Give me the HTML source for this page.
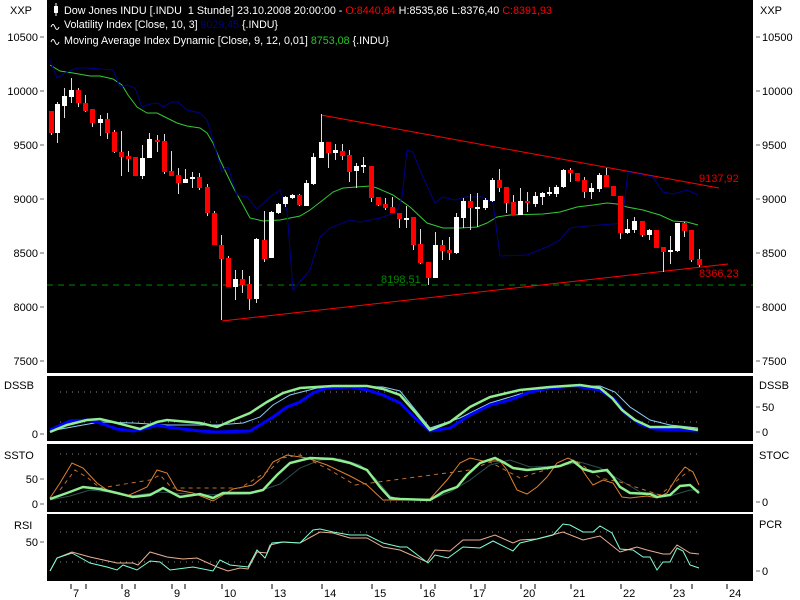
<!DOCTYPE html>
<html><head><meta charset="utf-8">
<style>
html,body{margin:0;padding:0;background:#fff;width:800px;height:600px;overflow:hidden}
svg{display:block;font-family:"Liberation Sans",sans-serif;font-size:11px}
</style></head>
<body>
<svg id="s" width="800" height="600" xmlns="http://www.w3.org/2000/svg">
<rect width="800" height="600" fill="#fff"/>
<rect x="47" y="0" width="706" height="373" fill="#000"/>
<rect x="47" y="376" width="706" height="65" fill="#000"/>
<rect x="47" y="444" width="706" height="68" fill="#000"/>
<rect x="47" y="514" width="706" height="67" fill="#000"/>
<g id="g"></g>
<rect x="54" y="6" width="4" height="7" fill="#fff"/><line x1="56" y1="3" x2="56" y2="16" stroke="#fff"/>
<text x="64" y="14" fill="#fff" textLength="488" lengthAdjust="spacingAndGlyphs">Dow Jones INDU [.INDU&#160; 1 Stunde] 23.10.2008 20:00:00 - <tspan fill="#f00">O:8440,84</tspan> H:8535,86 L:8376,40 <tspan fill="#f00">C:8391,93</tspan></text>
<path d="M51 27 q2-5 4 0 t4 0" stroke="#fff" fill="none"/>
<text x="64" y="28" fill="#fff" textLength="214" lengthAdjust="spacingAndGlyphs">Volatility Index [Close, 10, 3] <tspan fill="#00008b">9029,45</tspan> {.INDU}</text>
<path d="M51 42 q2-5 4 0 t4 0" stroke="#fff" fill="none"/>
<text x="64" y="44" fill="#fff" textLength="325" lengthAdjust="spacingAndGlyphs">Moving Average Index Dynamic [Close, 9, 12, 0,01] <tspan fill="#2c2">8753,08</tspan> {.INDU}</text>
<g fill="#000">
<text x="10" y="14">XXP</text><text x="760" y="14">XXP</text>
<text x="4" y="389">DSSB</text><text x="759" y="389">DSSB</text>
<text x="4" y="459">SSTO</text><text x="759" y="459">STOC</text>
<text x="14" y="529">RSI</text><text x="759" y="528">PCR</text>
</g>
<text x="381" y="283" fill="#080">8198,51</text>
<text x="699" y="182" fill="#d00">9137,92</text>
<text x="699" y="277" fill="#d00">8366,23</text>
</svg>
<script>
var g=document.getElementById('g'),h='';
function L(p,c,w,extra){h+='<polyline fill="none" stroke="'+c+'" stroke-width="'+(w||1)+'" '+(extra||'')+' points="'+p+'"/>';}
h+='<line x1="47" y1="285" x2="753" y2="285" stroke="#080" stroke-dasharray="6,5"/>';
[392,422,454,502,532,562].forEach(function(y){h+='<line x1="60" y1="'+y+'" x2="700" y2="'+y+'" stroke="#888" stroke-dasharray="1,5"/>';});
[[10500,37],[10000,91],[9500,145],[9000,199],[8500,253],[8000,307],[7500,361]].forEach(function(a){
h+='<text x="38" y="'+(a[1]+4)+'" text-anchor="end" fill="#000">'+a[0]+'</text><line x1="40" y1="'+a[1]+'" x2="44" y2="'+a[1]+'" stroke="#666"/>';
h+='<line x1="756" y1="'+a[1]+'" x2="760" y2="'+a[1]+'" stroke="#666"/><text x="762" y="'+(a[1]+4)+'" fill="#000">'+a[0]+'</text>';});
[[50,407],[0,432]].forEach(function(a){h+='<line x1="756" y1="'+a[1]+'" x2="760" y2="'+a[1]+'" stroke="#666"/><text x="762" y="'+(a[1]+4)+'" fill="#000">'+a[0]+'</text>';});
h+='<text x="38" y="438" text-anchor="end">0</text><line x1="40" y1="434" x2="44" y2="434" stroke="#666"/>';
h+='<text x="38" y="483" text-anchor="end">50</text><line x1="40" y1="479" x2="44" y2="479" stroke="#666"/>';
h+='<text x="38" y="508" text-anchor="end">0</text><line x1="40" y1="504" x2="44" y2="504" stroke="#666"/>';
h+='<text x="38" y="546" text-anchor="end">50</text><line x1="40" y1="542" x2="44" y2="542" stroke="#666"/>';
h+='<line x1="756" y1="502" x2="760" y2="502" stroke="#666"/><text x="762" y="506">0</text>';
h+='<line x1="756" y1="571" x2="760" y2="571" stroke="#666"/><text x="762" y="575">0</text>';
[['7',71,86],['8',122,135],['9',172,185],['10',222,0],['13',272,0],['14',322,0],['15',372,0],['16',421,435],['17',471,485],['20',521,535],['21',571,0],['22',621,0],['23',671,692],['24',727,0]].forEach(function(d){
h+='<line x1="'+d[1]+'" y1="584" x2="'+d[1]+'" y2="589" stroke="#000"/><text x="'+(d[1]+2)+'" y="597" fill="#000">'+d[0]+'</text>';
if(d[2])h+='<line x1="'+d[2]+'" y1="584" x2="'+d[2]+'" y2="589" stroke="#000"/>';});
h+='<line x1="321" y1="115" x2="719" y2="188" stroke="#f00"/><line x1="222" y1="321" x2="728" y2="264" stroke="#f00"/>';
L('50,65 60,71 73,73 90,76 100,76 113,79 122,85 128,95 137,107 147,113 157,113 167,118 177,123 187,126 200,128 207,133 213,143 220,160 233,187 243,205 250,218 263,221 280,220 300,216 310,210 323,200 333,192 343,188 370,186 377,188 393,195 410,207 427,223 443,228 460,228 477,227 487,223 497,217 510,215 543,214 560,212 577,207 593,205 607,203 617,204 627,207 643,210 660,215 673,221 687,222 698,225','#3c3');
L('50,60 57,78 67,72 77,68 87,68 113,70 120,87 127,85 135,88 142,107 150,104 158,103 163,107 172,102 178,102 187,110 200,113 207,120 213,140 222,172 225,168 228,167 237,195 247,197 257,209 270,197 280,190 287,210 293,290 303,278 310,270 320,237 330,228 350,220 360,222 380,218 397,212 402,197 407,150 413,152 422,175 435,203 442,197 455,200 465,197 483,197 493,203 500,256 527,255 547,247 560,240 570,228 587,226 613,224 622,223 628,172 653,177 663,192 673,194 687,190 698,195','#00008b');
var C=[[51,111,133,111,135,1],[57,104,133,102,143,0],[64,96,106,88,118,0],[71,90,97,78,103,0],[78,90,103,88,107,1],[85,103,111,95,112,1],[92,109,123,109,127,1],[100,119,123,115,136,0],[107,119,133,113,139,1],[114,132,152,130,153,1],[121,152,157,131,176,1],[128,156,159,151,172,1],[135,157,176,157,176,1],[142,158,176,145,179,0],[149,139,158,133,158,0],[157,140,142,135,152,1],[164,141,172,134,174,1],[171,171,176,151,176,1],[178,175,183,168,194,1],[185,179,183,169,183,0],[192,177,179,172,188,0],[199,177,188,173,190,1],[207,187,213,184,216,1],[214,213,245,211,245,1],[221,245,259,235,320,1],[228,258,287,256,287,1],[235,279,287,270,300,0],[242,279,285,270,293,1],[249,284,299,276,310,1],[256,239,299,238,303,0],[264,240,259,211,262,1],[271,212,258,211,258,0],[278,204,213,203,214,0],[285,197,204,196,207,0],[292,195,198,194,199,0],[299,195,205,194,206,1],[306,183,206,180,206,0],[313,157,184,153,185,0],[321,142,158,114,158,0],[328,142,153,142,168,1],[335,150,153,144,160,0],[342,151,156,144,160,1],[349,155,172,150,182,1],[356,166,171,163,188,0],[363,165,167,157,173,0],[371,166,198,166,202,1],[378,197,205,197,206,1],[385,204,208,198,210,1],[392,207,213,197,213,1],[399,213,219,213,228,1],[406,218,219,206,228,0],[413,217,245,217,250,1],[420,244,263,229,264,1],[428,262,278,262,285,1],[435,245,278,232,278,0],[442,245,251,240,260,1],[449,250,253,237,260,1],[456,217,253,213,254,0],[463,201,218,198,228,0],[470,201,208,194,230,1],[477,207,208,193,227,0],[485,200,208,198,210,0],[492,180,201,178,202,0],[499,180,188,169,192,1],[506,187,203,187,213,1],[513,202,215,195,215,1],[520,201,215,188,215,0],[527,201,203,192,212,1],[535,196,204,192,207,0],[542,193,197,192,205,0],[549,192,194,187,196,0],[556,187,194,185,197,0],[563,170,187,169,188,0],[570,170,173,168,182,1],[577,173,181,173,181,1],[584,180,192,177,198,1],[591,188,192,183,199,0],[599,175,189,173,192,0],[606,175,187,168,187,1],[613,186,196,186,196,1],[620,196,233,196,239,1],[627,229,233,219,234,0],[634,221,230,217,233,0],[642,221,235,221,237,1],[649,230,235,229,240,0],[656,230,248,230,248,1],[663,247,252,247,272,1],[670,250,252,236,264,0],[677,223,251,223,252,0],[684,223,231,222,237,1],[691,230,260,230,262,1],[699,259,265,249,267,1]];
C.forEach(function(c){var x=c[0];h+='<line x1="'+(x+.5)+'" y1="'+c[3]+'" x2="'+(x+.5)+'" y2="'+c[4]+'" stroke="#ddd"/>';
h+='<rect x="'+(x-2)+'" y="'+c[1]+'" width="5" height="'+Math.max(2,c[2]-c[1])+'" fill="'+(c[5]?'#f00':'#fff')+'"/>';});
L('50,431 83,425 100,422 133,423 167,425 217,425 243,423 260,417 273,405 290,395 317,388 350,386 383,387 400,391 430,428 460,418 490,403 520,394 560,387 600,386 615,392 630,407 650,420 670,425 698,428','#87cefa');
L('50,430 70,421 87,420 100,423 117,429 133,431 143,429 157,425 167,427 183,429 200,431 217,432 250,431 260,425 273,417 287,407 300,402 313,393 327,388 350,387 367,390 383,395 400,403 415,418 430,431 450,428 470,415 490,405 510,400 530,392 550,388 575,386 600,390 615,400 625,413 640,424 655,429 680,430 698,431','#00f',3);
L('50,432 67,425 87,420 100,419 117,423 140,429 157,422 167,420 200,423 217,427 233,420 250,413 267,402 283,393 300,388 333,386 367,386 383,389 400,395 415,412 430,430 450,422 470,407 490,397 520,390 550,387 580,385 600,388 612,398 622,410 635,420 650,427 680,427 698,430','#90ee90',2.5);
L('50,500 70,496 90,490 110,492 130,496 160,492 200,495 250,494 280,484 300,468 320,460 340,459 360,465 375,478 390,496 400,500 430,500 450,492 470,480 490,465 510,460 530,467 560,466 580,462 600,468 620,480 640,492 670,496 690,490 699,490','#2f4f4f');
L('50,498 60,483 72,463 83,468 97,483 110,492 127,496 147,487 157,470 167,473 177,490 193,493 213,501 233,489 253,485 263,477 273,462 287,455 307,458 327,465 350,476 367,485 383,500 400,500 430,499 447,480 460,463 470,458 483,461 500,461 507,470 517,490 527,494 537,487 547,477 557,463 568,458 577,462 587,477 593,485 603,480 613,483 622,497 630,498 647,496 657,498 667,493 677,477 685,467 693,472 699,485','#e08030');
L('60,490 75,470 88,478 100,488 150,480 160,475 172,488 240,488 270,470 282,458 300,455 330,470 355,485 470,470 490,462 520,478 545,470 575,460 600,478 620,482 660,495 680,478 690,470','#c07030',1,'stroke-dasharray="4,4"');
L('50,499 67,493 83,487 100,489 117,493 133,497 150,495 163,488 180,497 200,494 213,498 223,493 250,493 263,490 277,475 290,463 310,458 333,459 350,463 367,470 380,487 390,498 400,499 430,500 443,492 457,487 467,475 480,463 495,458 503,462 513,468 527,470 547,468 560,466 573,461 583,469 593,472 607,470 613,477 620,487 630,493 650,494 657,497 670,495 680,486 690,485 699,493','#90ee90',2.5);
L('50,571 57,558 72,552 90,557 117,563 133,563 138,565 150,552 167,557 183,559 197,558 217,567 228,571 240,568 248,569 257,552 267,553 270,545 283,542 300,543 320,532 333,533 350,538 367,538 383,547 400,550 427,562 435,550 450,551 463,540 480,540 495,535 513,543 520,540 537,539 563,532 583,540 600,536 620,552 637,547 647,550 663,554 670,554 677,545 690,553 699,554','#e8b090');
L('50,571 57,558 72,553 90,563 107,567 117,570 123,565 137,570 150,561 160,562 170,570 193,567 213,571 220,560 230,565 248,567 257,550 265,558 272,543 283,542 300,543 313,530 320,529 333,532 350,535 367,535 383,543 400,547 407,547 428,563 435,555 448,558 463,547 480,548 493,541 513,551 520,543 537,539 553,535 563,524 570,525 583,532 593,532 600,526 612,533 620,549 633,550 643,557 650,557 657,570 663,562 670,562 677,548 683,551 690,565 699,568','#7fffd4');
g.innerHTML=h;
</script>
</body></html>
